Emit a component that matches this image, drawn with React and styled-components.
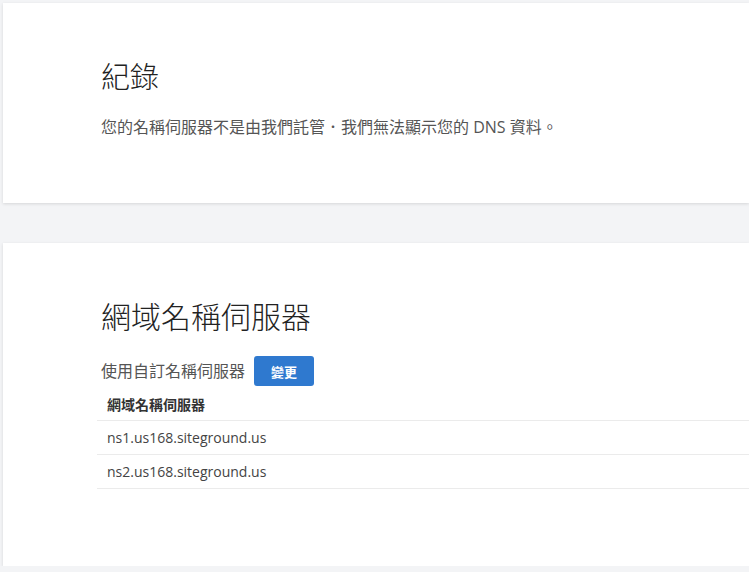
import React from 'react';
import styled, { createGlobalStyle } from 'styled-components';

const GlobalStyle = createGlobalStyle`
  html, body {
    margin: 0;
    padding: 0;
    background: #f3f4f6;
    font-family: "Open Sans", "Noto Sans CJK TC", sans-serif;
    color: #333;
  }
`;

const Page = styled.div`
  display: flex;
  flex-direction: column;
  gap: 40px;
  padding: 3px 0 0 3px;
  overflow: hidden;
`;

const Card = styled.section`
  background: #fff;
  box-shadow: 0 1px 3px rgba(0, 0, 0, 0.12);
  height: ${p => p.h}px;
  box-sizing: border-box;
  padding: ${p => p.pt}px 0 0 98px;
`;

const Title = styled.h1`
  margin: 0;
  font-weight: 300;
  font-size: ${p => p.size}px;
  line-height: 1.3;
  color: #222;
  font-family: "Noto Sans CJK TC", sans-serif;
`;

const Text = styled.p`
  margin: ${p => p.mt || 0}px 0 0;
  font-size: 16px;
  line-height: 22px;
  color: #555;
  font-family: "Open Sans", "Noto Sans CJK TC", sans-serif;
`;

const Row = styled.div`
  display: flex;
  align-items: center;
  gap: 9px;
  margin-top: 21px;
`;

const Button = styled.button`
  width: 60px;
  height: 30px;
  border: none;
  border-radius: 3px;
  background: #2f79cf;
  color: #fff;
  font-weight: 700;
  font-size: 13px;
  font-family: "Noto Sans CJK TC", sans-serif;
  padding: 0;
`;

const Table = styled.div`
  margin-top: 1px;
  margin-left: -4px;
`;

const Cell = styled.div`
  height: 33px;
  display: flex;
  align-items: center;
  padding-left: 10px;
  border-bottom: 1px solid #ebebeb;
  font-size: 14px;
  font-weight: ${p => (p.head ? 700 : 400)};
  color: ${p => (p.head ? '#333' : '#444')};
  font-family: "Open Sans", "Noto Sans CJK TC", sans-serif;
`;

export default function App() {
  return (
    <>
      <GlobalStyle />
      <Page>
        <Card h={200} pt={54}>
          <Title size={29}>紀錄</Title>
          <Text mt={21}>您的名稱伺服器不是由我們託管．我們無法顯示您的 DNS 資料。</Text>
        </Card>
        <Card h={323} pt={53}>
          <Title size={30}>網域名稱伺服器</Title>
          <Row>
            <Text>使用自訂名稱伺服器</Text>
            <Button>變更</Button>
          </Row>
          <Table>
            <Cell head>網域名稱伺服器</Cell>
            <Cell>ns1.us168.siteground.us</Cell>
            <Cell>ns2.us168.siteground.us</Cell>
          </Table>
        </Card>
      </Page>
    </>
  );
}
